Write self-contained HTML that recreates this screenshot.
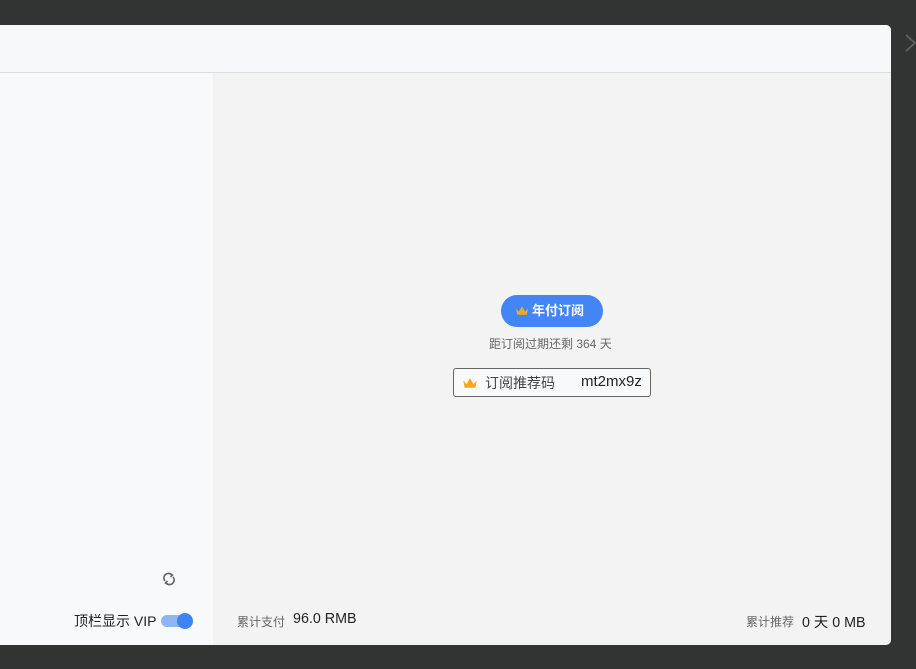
<!DOCTYPE html>
<html><head><meta charset="utf-8"><style>
html,body{margin:0;padding:0;width:916px;height:669px;overflow:hidden;background:#323433;font-family:"Liberation Sans","Noto Sans CJK SC",sans-serif;}
.dlg{position:absolute;left:0;top:25px;width:891px;height:620px;background:#f3f3f3;border-radius:0 5px 5px 0;overflow:hidden;}
.hdr{position:absolute;left:0;top:0;width:891px;height:47px;background:#f7f8fa;border-bottom:1px solid #dcdee2;}
.left{position:absolute;left:0;top:48px;width:213px;height:572px;background:#f8f9fb;}
.pill{position:absolute;left:501px;top:270px;width:102px;height:32px;border-radius:16px;background:#4285f4;color:#fff;font-size:13px;font-weight:bold;line-height:32px;text-align:center;}
.t{position:absolute;white-space:nowrap;}
.box{position:absolute;left:453px;top:343px;width:196px;height:27px;border:1px solid #666;border-radius:3px;background:#f8f9fb;}
.close{position:absolute;left:905px;top:34px;}
</style></head><body>
<div class="dlg">
<div class="hdr"></div>
<div class="left"></div>
<div class="pill"><svg width="14" height="11" viewBox="0 0 13 10" style="vertical-align:-1px;margin-right:3px;margin-left:-5px"><path d="M1 3 L3.5 6 L6.5 1 L9.5 6 L12 3 L11 9 L2 9Z" fill="#f5a623"/></svg>年付订阅</div>
<div class="t" style="left:489px;top:310px;font-size:12px;color:#666;">距订阅过期还剩 364 天</div>
<div class="box">
<svg width="16" height="12" viewBox="0 0 13 10" style="position:absolute;left:8px;top:8px"><path d="M1 3 L3.5 6 L6.5 1 L9.5 6 L12 3 L11 9 L2 9Z" fill="#f5a623"/></svg>
<span class="t" style="left:31px;top:4px;font-size:14px;color:#444;">订阅推荐码</span>
<span class="t" style="left:127px;top:4px;font-size:15px;color:#222;">mt2mx9z</span>
</div>
<svg style="position:absolute;left:162px;top:547px" width="14" height="14" viewBox="0 0 14 14" fill="none" stroke="#666" stroke-width="1.6"><path d="M3 9 A4.5 4.5 0 0 1 10 3"/><path d="M11 5 A4.5 4.5 0 0 1 4 11"/><path d="M8 1.5 L10.5 3 L8.5 5" /><path d="M6 12.5 L3.5 11 L5.5 9"/></svg>
<div class="t" style="left:74px;top:586px;font-size:14px;color:#222;">顶栏显示 VIP</div>
<div style="position:absolute;left:161px;top:590px;width:30px;height:12px;border-radius:6px;background:#8fb5f8;"></div>
<div style="position:absolute;left:177px;top:588px;width:16px;height:16px;border-radius:8px;background:#3d85f5;"></div>
<div class="t" style="left:237px;top:588px;font-size:12px;color:#666;">累计支付</div>
<div class="t" style="left:293px;top:586px;font-size:14.3px;color:#222;">96.0 RMB</div>
<div class="t" style="left:746px;top:588px;font-size:12px;color:#666;">累计推荐</div>
<div class="t" style="left:802px;top:586px;font-size:14.3px;color:#222;">0 天 0 MB</div>
</div>
<svg class="close" width="12" height="18" viewBox="0 0 12 18" fill="none" stroke="#5a5c60" stroke-width="2"><path d="M1 1 L10 9 L1 17"/></svg>
</body></html>
